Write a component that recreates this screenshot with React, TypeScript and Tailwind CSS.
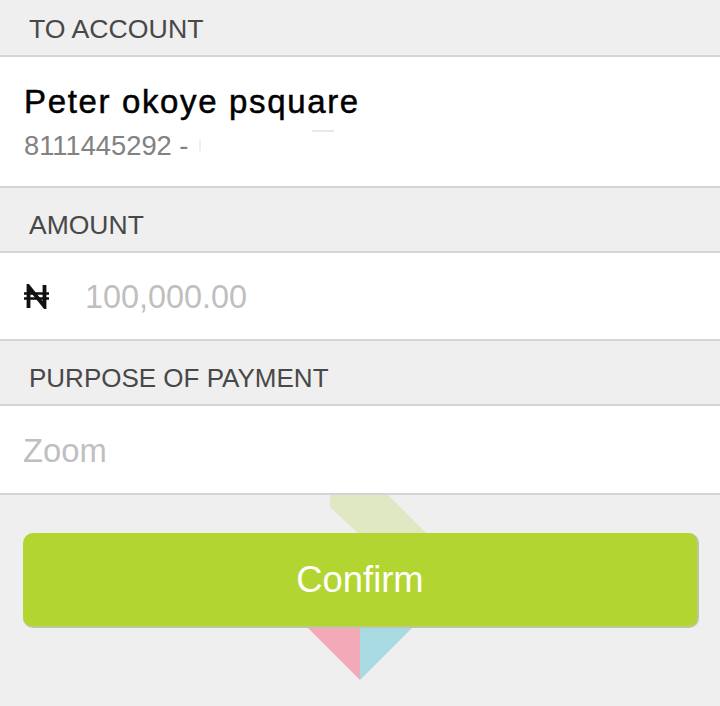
export default function App() {
  const font = "font-['Liberation_Sans',Arial,sans-serif]";
  const head = "h-[65px] bg-[#efefef] border-b-2 border-[#d4d4d4] pl-[29px] pt-[12px] flex items-center text-[#484848]";
  return (
    <div className={`${font} relative w-[720px] h-[706px] bg-[#efefef] overflow-hidden flex flex-col`}>
      <div className="h-[57px] bg-[#efefef] border-b-2 border-[#d4d4d4] pl-[29px] pt-[4px] flex items-center text-[26.7px] text-[#484848]">TO ACCOUNT</div>
      <div className="h-[131px] bg-white border-b-2 border-[#d4d4d4] pl-[24px] flex flex-col">
        <div className="mt-[25px] text-[33px] leading-[40px] tracking-[1.65px] text-black [-webkit-text-stroke:0.5px_black]">Peter okoye psquare</div>
        <div className="relative mt-[7px] text-[27.3px] leading-[34px] text-[#828282]">
          8111445292 -
          <span className="absolute left-[175px] top-[10px] w-[2px] h-[12px] bg-[#eeeeee]" />
          <span className="absolute left-[288px] top-[1px] w-[22px] h-[2px] bg-[#e8e8e8]" />
        </div>
      </div>
      <div className={`${head} text-[26.5px]`}>AMOUNT</div>
      <div className="h-[88px] bg-white border-b-2 border-[#d4d4d4] pl-[24px] flex items-center">
        <svg width="25" height="25" viewBox="0 0 25 25" className="shrink-0" fill="none" stroke="#111" aria-hidden="true">
          <path d="M4.5 24V2.5L20.5 22.5V1" strokeWidth="3.8" />
          <path d="M0 9.5H25M0 14.5H25" strokeWidth="2.4" />
        </svg>
        <span className="ml-[36px] pt-[2px] text-[32.4px] text-[#bfbfbf]">100,000.00</span>
      </div>
      <div className={`${head} text-[26px]`}>PURPOSE OF PAYMENT</div>
      <div className="h-[89px] bg-white border-b-2 border-[#d4d4d4] pl-[23px] pt-[2px] flex items-center text-[32.8px] text-[#bfbfbf]">Zoom</div>
      <div className="relative flex-1">
        <svg width="720" height="212" viewBox="0 0 720 212" className="absolute left-0 top-0" aria-hidden="true">
          <polygon points="330,0 388,0 426,38 358,38 330,12" fill="#dfe8c2" />
          <polygon points="307,132 360,132 360,185" fill="#f4a9b8" />
          <polygon points="360,132 413,132 360,185" fill="#a8dae2" />
        </svg>
        <button className="absolute left-[23px] top-[38px] w-[676px] h-[95px] pt-[2px] rounded-[10px] bg-[#b3d531] border-r-2 border-b-2 border-[#bcc79a] text-white text-[36.4px]">Confirm</button>
      </div>
    </div>
  );
}
